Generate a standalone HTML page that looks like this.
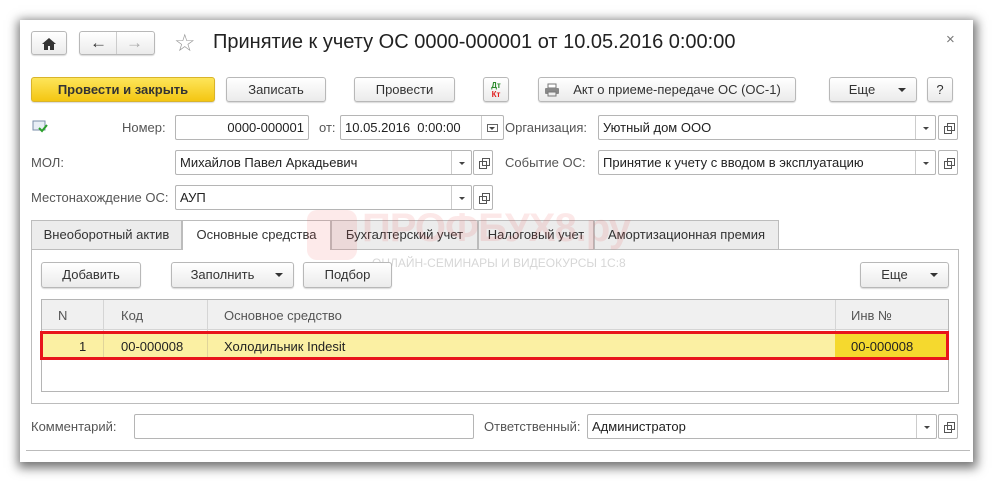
<!DOCTYPE html>
<html><head><meta charset="utf-8"><style>
*{box-sizing:border-box;margin:0;padding:0}
body{width:993px;height:481px;background:#fff;font-family:"Liberation Sans",Arial,sans-serif;font-size:13px;color:#333;position:relative;overflow:hidden}
.win{position:absolute;left:20px;top:20px;width:953px;height:442px;background:#fff;box-shadow:1px 3px 10px 3px rgba(0,0,0,.55)}
.a{position:absolute}
.btn{position:absolute;border:1px solid #b8b8b8;border-radius:3px;background:linear-gradient(#fff,#ebebeb);box-shadow:0 1px 1px rgba(0,0,0,.15);text-align:center;line-height:23px;color:#333}
.fld{position:absolute;border:1px solid #b5b5b5;border-radius:2px;background:#fff;height:25px;line-height:23px;padding-left:4px;color:#222}
.dd{position:absolute;top:0;bottom:0;width:20px;border-left:1px solid #ccc}
.dd:after{content:"";position:absolute;left:7px;top:11px;border:3px solid transparent;border-top:3px solid #444}
.op{position:absolute;width:20px;height:25px;border:1px solid #b5b5b5;border-radius:2px;background:#fff}
.op:after{content:"";position:absolute;left:5px;top:10px;width:6px;height:6px;border:1px solid #555}
.op:before{content:"";position:absolute;left:8px;top:7px;width:6px;height:6px;border:1px solid #555;background:#fff}
.lbl{position:absolute;color:#555;line-height:25px}
.tab{position:absolute;top:220px;height:29px;border:1px solid #bcbcbc;border-bottom:none;background:#ececec;line-height:28px;text-align:center;color:#333}
.arr:after{content:"";position:absolute;right:10px;top:10px;border:4px solid transparent;border-top:4px solid #333}
</style></head><body>
<div class="win"></div>
<div class="btn" style="left:31px;top:31px;width:36px;height:24px"><svg width="14" height="12" style="margin-top:6px" viewBox="0 0 14 12"><path d="M7 0L0 6h2v6h4V8h2v4h4V6h2z" fill="#333"/></svg></div>
<div class="btn" style="left:79px;top:31px;width:76px;height:24px"></div>
<div class="a" style="left:116px;top:32px;width:1px;height:22px;background:#ccc"></div>
<div class="a" style="left:90px;top:33px;font-size:17px;font-weight:bold;color:#333">&#8592;</div>
<div class="a" style="left:126px;top:33px;font-size:17px;color:#aaa">&#8594;</div>
<div class="a" style="left:174px;top:29px;font-size:24px;color:#999">&#9734;</div>
<div class="a" style="left:213px;top:31px;font-size:20px;color:#222">Принятие к учету ОС 0000-000001 от 10.05.2016 0:00:00</div>
<div class="a" style="left:946px;top:31px;font-size:15px;color:#777">×</div>
<div class="btn" style="left:31px;top:77px;width:184px;height:25px;background:linear-gradient(#fde55a,#f4c612);border-color:#d9b42a;font-weight:bold;color:#333">Провести и закрыть</div>
<div class="btn" style="left:226px;top:77px;width:100px;height:25px">Записать</div>
<div class="btn" style="left:354px;top:77px;width:101px;height:25px">Провести</div>
<div class="btn" style="left:483px;top:77px;width:26px;height:25px;font-size:8px;line-height:9px;font-weight:bold;padding-top:3px"><span style="color:#2a8a2a">Дт</span><br><span style="color:#e02020">Кт</span></div>
<div class="btn" style="left:538px;top:77px;width:258px;height:25px;padding-left:20px">Акт о приеме-передаче ОС (ОС-1)</div>
<svg class="a" style="left:544px;top:83px" width="16" height="14"><rect x="4" y="1" width="8" height="4" fill="#fff" stroke="#777"/><rect x="1" y="5" width="14" height="6" rx="1" fill="#888"/><rect x="4" y="9" width="8" height="4" fill="#eee" stroke="#777"/></svg>
<div class="btn arr" style="left:829px;top:77px;width:88px;height:25px;padding-right:22px">Еще</div>
<div class="btn" style="left:927px;top:77px;width:26px;height:25px">?</div>
<svg class="a" style="left:32px;top:120px" width="16" height="13"><rect x="1" y="1" width="12" height="9" fill="#e8eef5" stroke="#7a8ea8"/><path d="M7 8l3 3 5-6" stroke="#2ca02c" stroke-width="2" fill="none"/></svg>
<div class="lbl" style="left:122px;top:115px">Номер:</div>
<div class="fld" style="left:175px;top:115px;width:134px;text-align:right;padding-right:4px">0000-000001</div>
<div class="lbl" style="left:319px;top:115px">от:</div>
<div class="fld" style="left:340px;top:115px;width:164px">10.05.2016&nbsp; 0:00:00<div class="dd" style="right:0;width:22px"></div></div>
<div class="a" style="left:487px;top:124px;width:11px;height:8px;border:1px solid #666"></div>
<div class="lbl" style="left:505px;top:115px">Организация:</div>
<div class="fld" style="left:598px;top:115px;width:338px">Уютный дом ООО<div class="dd" style="right:0"></div></div>
<div class="op" style="left:938px;top:115px"></div>
<div class="lbl" style="left:31px;top:150px">МОЛ:</div>
<div class="fld" style="left:175px;top:150px;width:297px">Михайлов Павел Аркадьевич<div class="dd" style="right:0"></div></div>
<div class="op" style="left:473px;top:150px"></div>
<div class="lbl" style="left:505px;top:150px">Событие ОС:</div>
<div class="fld" style="left:598px;top:150px;width:338px">Принятие к учету с вводом в эксплуатацию<div class="dd" style="right:0"></div></div>
<div class="op" style="left:938px;top:150px"></div>
<div class="lbl" style="left:31px;top:185px">Местонахождение ОС:</div>
<div class="fld" style="left:175px;top:185px;width:297px">АУП<div class="dd" style="right:0"></div></div>
<div class="op" style="left:473px;top:185px"></div>
<div class="a" style="left:31px;top:249px;width:928px;height:155px;border:1px solid #bcbcbc"></div>
<div class="tab" style="left:31px;width:151px">Внеоборотный актив</div>
<div class="tab" style="left:182px;width:149px;background:#fff;height:30px">Основные средства</div>
<div class="tab" style="left:331px;width:147px">Бухгалтерский учет</div>
<div class="tab" style="left:478px;width:116px">Налоговый учет</div>
<div class="tab" style="left:594px;width:185px">Амортизационная премия</div>
<!-- watermark over tabs -->
<div class="a" style="left:307px;top:210px;width:50px;height:50px;background:rgba(235,80,80,.12);border-radius:10px"></div>
<div class="a" style="left:362px;top:206px;font-size:40px;font-weight:bold;color:rgba(235,80,80,.13);white-space:nowrap;letter-spacing:-1px">ПРОФБУХ8.ру</div>
<div class="a" style="left:372px;top:256px;font-size:12px;color:rgba(120,120,120,.3);white-space:nowrap">ОНЛАЙН-СЕМИНАРЫ И ВИДЕОКУРСЫ 1С:8</div>
<div class="btn" style="left:41px;top:262px;width:100px;height:26px;line-height:24px">Добавить</div>
<div class="btn arr" style="left:171px;top:262px;width:123px;height:26px;line-height:24px;padding-right:20px">Заполнить</div>
<div class="btn" style="left:303px;top:262px;width:89px;height:26px;line-height:24px">Подбор</div>
<div class="btn arr" style="left:860px;top:262px;width:89px;height:26px;line-height:24px;padding-right:20px">Еще</div>
<div class="a" style="left:41px;top:299px;width:908px;height:93px;border:1px solid #b5b5b5;background:#fff"></div>
<div class="a" style="left:42px;top:300px;width:906px;height:30px;background:#f0f0f0;border-bottom:1px solid #d5d5d5"></div>
<div class="a" style="left:103px;top:300px;width:1px;height:60px;background:#d5d5d5"></div>
<div class="a" style="left:207px;top:300px;width:1px;height:60px;background:#d5d5d5"></div>
<div class="a" style="left:835px;top:300px;width:1px;height:60px;background:#d5d5d5"></div>
<div class="a" style="left:58px;top:308px;color:#555">N</div>
<div class="a" style="left:121px;top:308px;color:#555">Код</div>
<div class="a" style="left:224px;top:308px;color:#555">Основное средство</div>
<div class="a" style="left:851px;top:308px;color:#555">Инв №</div>
<div class="a" style="left:40px;top:331px;width:909px;height:29px;background:#fbf0a3;border:3px solid #e8141c"></div>
<div class="a" style="left:835px;top:334px;width:111px;height:23px;background:#f5d92e"></div>
<div class="a" style="left:103px;top:334px;width:1px;height:23px;background:#e0d49a"></div>
<div class="a" style="left:207px;top:334px;width:1px;height:23px;background:#e0d49a"></div>
<div class="a" style="left:79px;top:339px;color:#222">1</div>
<div class="a" style="left:121px;top:339px;color:#222">00-000008</div>
<div class="a" style="left:224px;top:339px;color:#222">Холодильник Indesit</div>
<div class="a" style="left:851px;top:339px;color:#222">00-000008</div>
<div class="lbl" style="left:31px;top:414px">Комментарий:</div>
<div class="fld" style="left:134px;top:414px;width:340px"></div>
<div class="lbl" style="left:484px;top:414px">Ответственный:</div>
<div class="fld" style="left:587px;top:414px;width:350px">Администратор<div class="dd" style="right:0"></div></div>
<div class="op" style="left:938px;top:414px"></div>
<div class="a" style="left:26px;top:450px;width:944px;height:1px;background:#bbb"></div>
</body></html>
